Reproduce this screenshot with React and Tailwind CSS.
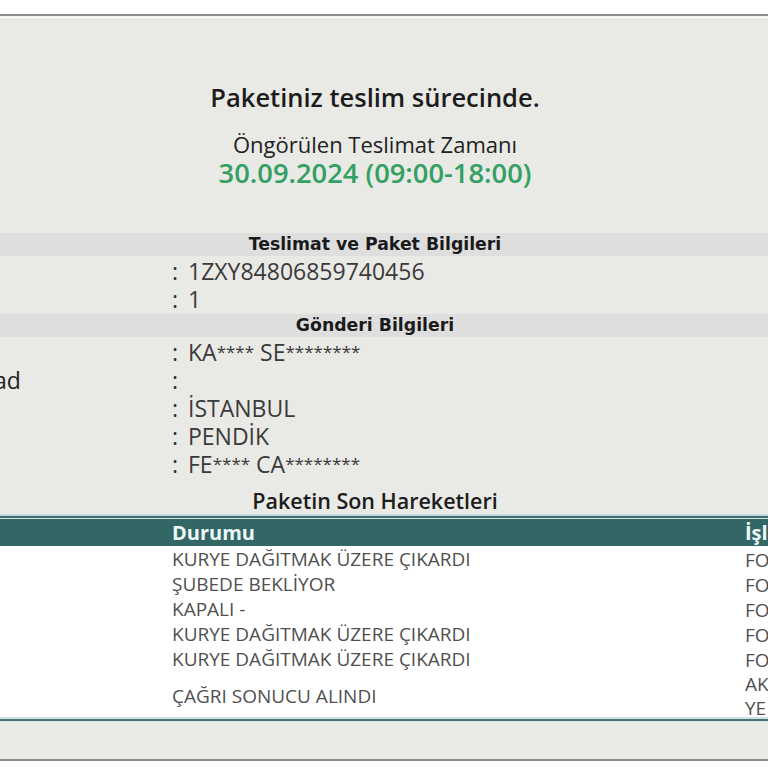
export default function App() {
  const rows = [
    ["KURYE DAĞITMAK ÜZERE ÇIKARDI", ["FO"]],
    ["ŞUBEDE BEKLİYOR", ["FO"]],
    ["KAPALI -", ["FO"]],
    ["KURYE DAĞITMAK ÜZERE ÇIKARDI", ["FO"]],
    ["KURYE DAĞITMAK ÜZERE ÇIKARDI", ["FO"]],
    ["ÇAĞRI SONUCU ALINDI", ["AK", "YE"]],
  ];
  const info1 = [
    ["", "1ZXY84806859740456"],
    ["", "1"],
  ];
  const info2 = [
    ["", "KA**** SE********"],
    ["ad", ""],
    ["", "İSTANBUL"],
    ["", "PENDİK"],
    ["", "FE**** CA********"],
  ];
  const renderValue = (v) =>
    v.split(/(\*+)/).map((part, i) =>
      part.startsWith("*") ? (
        <span key={i} className="text-[17px] align-[3px]">
          {part}
        </span>
      ) : (
        <span key={i}>{part}</span>
      )
    );
  const InfoRow = ({ label, value }) => (
    <div className="grid grid-cols-[169px_19px_1fr] h-[28px] items-center text-[23px] leading-[28px] text-[#3a3a3a]">
      <div className="text-[#222] font-medium -ml-[6px] whitespace-nowrap">{label}</div>
      <div className="pl-[3px] text-[#333]">:</div>
      <div className="whitespace-nowrap">{renderValue(value)}</div>
    </div>
  );
  const Bar = ({ children }) => (
    <div className="w-[768px] h-[23px] bg-[#dedede] flex">
      <div className="w-[750px] text-center font-['DejaVu_Sans',sans-serif] font-bold text-[17.3px] leading-[23px] text-[#1a1a1a]">
        {children}
      </div>
    </div>
  );
  return (
    <div className="w-[768px] h-[768px] bg-white overflow-hidden font-['Open_Sans',sans-serif]">
      <div className="h-[14px] bg-white" />
      <div className="h-[2px] bg-[#8e8e8e]" />
      <div className="h-[743px] bg-[#e9e9e5] flex flex-col">
        <div className="h-[3px] bg-[#f3f3ef]" />
        <div className="h-[1px] bg-[#e0e0dc]" />
        <div className="w-[750px] flex flex-col items-center">
          <div className="mt-[61px] text-[25.5px] leading-[32px] font-semibold text-[#1c1c1c]">
            Paketiniz teslim sürecinde.
          </div>
          <div className="mt-[19px] text-[22px] leading-[24px] text-[#222]">
            Öngörülen Teslimat Zamanı
          </div>
          <div className="mt-[2px] text-[27.3px] leading-[30px] font-semibold text-[#32a062]">
            30.09.2024 (09:00-18:00)
          </div>
        </div>
        <div className="mt-[45px]">
          <Bar>Teslimat ve Paket Bilgileri</Bar>
        </div>
        <div className="mt-[1px]">
          {info1.map((r, i) => (
            <InfoRow key={i} label={r[0]} value={r[1]} />
          ))}
        </div>
        <div className="mt-[1px]">
          <Bar>Gönderi Bilgileri</Bar>
        </div>
        <div className="mt-[1px]">
          {info2.map((r, i) => (
            <InfoRow key={i} label={r[0]} value={r[1]} />
          ))}
        </div>
        <div className="w-[750px] mt-[10px] text-center text-[21.5px] leading-[26px] font-semibold text-[#1c1c1c]">
          Paketin Son Hareketleri
        </div>
        <div className="w-[768px]">
          <div className="h-[2px] bg-[#c4dada]" />
          <div className="h-[2px] bg-[#3d6e6d]" />
          <div className="h-[1px] bg-[#d6e6e6]" />
          <div className="grid grid-cols-[172px_573px_1fr] h-[27px] bg-[#326766] items-center text-[20px] leading-[27px] font-bold text-[#eef8f8]">
            <div />
            <div>Durumu</div>
            <div className="whitespace-nowrap">İşlem</div>
          </div>
          <div className="bg-white pt-[1px] text-[19px] text-[#505050]">
            {rows.map((r, i) => (
              <div
                key={i}
                className={
                  "grid grid-cols-[172px_573px_1fr] items-center " +
                  (r[1].length > 1 ? "h-[45px]" : "h-[25px]")
                }
              >
                <div />
                <div className="whitespace-nowrap leading-[25px]">{r[0]}</div>
                <div className="whitespace-nowrap leading-[24px]">
                  {r[1].map((t, j) => (
                    <div key={j}>{t}</div>
                  ))}
                </div>
              </div>
            ))}
          </div>
          <div className="h-[2px] bg-[#cfe0e0]" />
          <div className="h-[2px] bg-[#4a7473]" />
          <div className="h-[1px] bg-[#d6e4e4]" />
        </div>
      </div>
      <div className="h-[2px] bg-[#8e8e8e]" />
    </div>
  );
}
